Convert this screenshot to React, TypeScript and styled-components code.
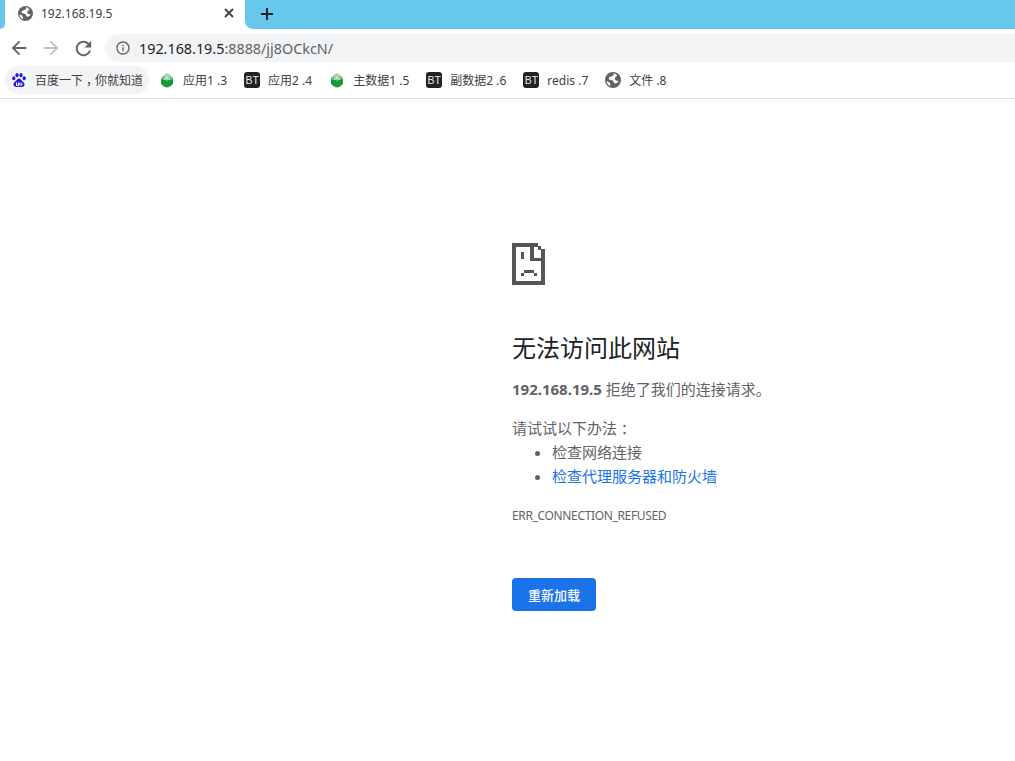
import React from 'react';
import styled, { createGlobalStyle } from 'styled-components';

const GlobalStyle = createGlobalStyle`
  html, body {
    margin: 0;
    padding: 0;
    background: #fff;
  }
  body {
    font-family: "Noto Sans", "Noto Sans CJK SC", sans-serif;
  }
`;

const Page = styled.div`
  width: 1015px;
  height: 761px;
  overflow: hidden;
  background: #fff;
`;

const TabStrip = styled.div`
  display: flex;
  height: 29px;
  background: #fff;
`;

const StripLeft = styled.div`
  width: 5px;
  background: #66c9ec;
  border-bottom-right-radius: 6px;
`;

const StripRight = styled.div`
  flex: 1;
  display: flex;
  align-items: center;
  padding: 0 0 2px 15px;
  background: #66c9ec;
  border-bottom-left-radius: 8px;
`;

const Tab = styled.div`
  width: 240px;
  box-sizing: border-box;
  display: flex;
  align-items: center;
  padding: 0 10px 3px 13px;
  gap: 8px;
`;

const TabTitle = styled.span`
  flex: 1;
  font-size: 12px;
  color: #3c4043;
`;

const Toolbar = styled.div`
  display: flex;
  align-items: center;
  height: 33px;
  padding: 5px 0 0 3px;
  box-sizing: border-box;
`;

const NavButton = styled.div`
  width: 32px;
  height: 24px;
  display: flex;
  align-items: center;
  justify-content: center;
`;

const Omnibox = styled.div`
  flex: 1;
  height: 28px;
  margin-left: 6px;
  display: flex;
  align-items: center;
  gap: 8px;
  padding-left: 10px;
  background: #f1f3f4;
  border-radius: 14px 0 0 14px;
`;

const UrlText = styled.span`
  font-size: 14.35px;
  color: #5f6368;
  b {
    font-weight: 400;
    color: #202124;
  }
`;

const BookmarkBar = styled.div`
  display: flex;
  align-items: center;
  height: 37px;
  padding-left: 5px;
  box-sizing: border-box;
  border-bottom: 1px solid #dadce0;
`;

const Bookmark = styled.div<{ $active?: boolean }>`
  display: flex;
  align-items: center;
  gap: 8px;
  height: 28px;
  padding: 0 6px;
  margin-right: ${({ $active }) => ($active ? '4px' : '5px')};
  border-radius: 14px;
  font-size: 12px;
  white-space: nowrap;
  color: #3c4043;
  background: ${({ $active }) => ($active ? '#f1f3f4' : 'transparent')};
`;

const BtBadge = styled.span`
  width: 16px;
  height: 16px;
  border-radius: 3px;
  background: #222;
  color: #e8e8e8;
  font-size: 10.5px;
  line-height: 16px;
  text-align: center;
  font-family: "Liberation Sans", sans-serif;
  font-weight: 400;
`;

/* full-width punctuation sits in the middle of its cell in the reference */
const Punct = styled.span<{ $cell: number }>`
  display: inline-block;
  width: ${({ $cell }) => $cell}px;
  text-align: center;
  font-feature-settings: "halt";
`;

const ErrorContent = styled.main`
  padding: 144px 0 0 512px;
  color: #5f6368;
  font-size: 15px;
`;

const SadFile = styled.svg`
  display: block;
  width: 33px;
  height: 42px;
`;

const Heading = styled.h1`
  margin: 45px 0 0;
  height: 36px;
  line-height: 36px;
  font-size: 24px;
  font-weight: 400;
  color: #202124;
`;

const Summary = styled.p`
  margin: 11px 0 0;
  line-height: 24px;
  strong {
    font-weight: 700;
  }
`;

const Advice = styled.p`
  margin: 15px 0 0;
  line-height: 24px;
`;

const AdviceList = styled.ul`
  margin: 0;
  padding: 0 0 0 40px;
  line-height: 24px;
`;

const AdviceLink = styled.a`
  color: #1a73e8;
  text-decoration: none;
`;

const ErrorCode = styled.div`
  margin-top: 18px;
  line-height: 20px;
  font-size: 12px;
  letter-spacing: -0.35px;
  color: #5f6368;
`;

const ReloadButton = styled.button`
  display: block;
  margin-top: 52px;
  width: 84px;
  height: 33px;
  padding: 0;
  border: 0;
  border-radius: 4px;
  background: #1a73e8;
  color: #fff;
  font-family: inherit;
  font-size: 13px;
  font-weight: 500;
`;

const Globe = ({ size }: { size: number }) => (
  <svg width={size} height={size} viewBox="0 0 16 16">
    <circle cx="8" cy="8" r="8" fill="#5f6368" />
    <path
      d="M8.500 1.200c.4 1 .2 2-.8 2.600C6.600 4.500 5 4.400 4.200 5.300c-.9 1 -.4 2.300.8 2.700 1.200.4 2.500.2 3.300 1 .6.600.3 1.400.8 2 .5.500 1.400.5 2.200.200 1-.4 1.900-1.300 2.300-2.300-1-.3-2-.2-2.900-.7-1.100-.6-1-1.800-.4-2.700.5-.8 1.500-1.100 2-1.900C11.500 2.600 10 1.500 8.500 1.200z"
      fill="#fff"
    />
    <path d="M1.600 9.500c1.300-.2 2.500.4 3.200 1.400.6.900.7 2.100.3 3-1.800-.8-3.100-2.500-3.500-4.400z" fill="#fff" />
  </svg>
);

const CloseIcon = () => (
  <svg width="12" height="12" viewBox="0 0 12 12">
    <path d="M2 2l8 8M10 2l-8 8" stroke="#3c4043" strokeWidth="1.8" fill="none" />
  </svg>
);

const PlusIcon = () => (
  <svg width="14" height="14" viewBox="0 0 14 14">
    <path d="M7 1v12M1 7h12" stroke="#202124" strokeWidth="2" fill="none" />
  </svg>
);

const ArrowIcon = ({ color, flip }: { color: string; flip?: boolean }) => (
  <svg width="22" height="22" viewBox="0 0 24 24" style={flip ? { transform: 'scaleX(-1)' } : undefined}>
    <path d="M20 11H7.830l5.590-5.590L12 4l-8 8 8 8 1.410-1.410L7.830 13H20v-2z" fill={color} />
  </svg>
);

const ReloadIcon = () => (
  <svg width="23" height="23" viewBox="0 0 24 24">
    <path
      d="M17.650 6.350C16.200 4.900 14.210 4 12 4c-4.420 0-7.990 3.580-7.990 8s3.570 8 7.990 8c3.730 0 6.840-2.550 7.730-6h-2.080c-.82 2.330-3.040 4-5.650 4-3.310 0-6-2.690-6-6s2.690-6 6-6c1.660 0 3.140.69 4.220 1.780L13 11h7V4l-2.350 2.350z"
      fill="#5f6368"
    />
  </svg>
);

const InfoIcon = () => (
  <svg width="16" height="16" viewBox="0 0 24 24">
    <path
      d="M11 7h2v2h-2zm0 4h2v6h-2zm1-9C6.480 2 2 6.480 2 12s4.480 10 10 10 10-4.480 10-10S17.520 2 12 2zm0 18c-4.410 0-8-3.590-8-8s3.590-8 8-8 8 3.590 8 8-3.590 8-8 8z"
      fill="#5f6368"
    />
  </svg>
);

const PawIcon = () => (
  <svg width="16" height="16" viewBox="0 0 16 16">
    <rect width="16" height="16" rx="2" fill="#f4f6fc" />
    <g fill="#2319dc">
      <ellipse cx="2.800" cy="6.300" rx="1.600" ry="2" />
      <ellipse cx="6" cy="3.200" rx="1.600" ry="2.100" />
      <ellipse cx="10" cy="3.200" rx="1.600" ry="2.100" />
      <ellipse cx="13.200" cy="6.300" rx="1.600" ry="2" />
      <path d="M8 6.500c-1.600 0-2 1.600-3.200 2.600C3.500 10.100 2.500 11 2.500 12.500c0 1.800 1.500 2.500 3 2.500 1 0 1.600-.3 2.500-.3s1.500.3 2.500.3c1.500 0 3-.7 3-2.500 0-1.500-1-2.400-2.300-3.400C10 8.100 9.600 6.500 8 6.500z" />
    </g>
    <path d="M5.500 10.500v3h2v-3M8.800 10.500v2.500h2v-2.500" fill="none" stroke="#fff" strokeWidth="1" />
  </svg>
);

const ShieldIcon = () => (
  <svg width="16" height="16" viewBox="0 0 16 16">
    <path d="M2 7h12v3.500C14 13 11 15 8 15.500 5 15 2 13 2 10.500z" fill="#169a3a" />
    <path d="M8 1L2 5.500 2 7 8 8.500 14 7 14 5.500z" fill="#7fc292" />
    <path d="M8 1v7.500M4.500 3.500L11 7.500M11.500 3.500L5 7.500" stroke="#e4f3e8" strokeWidth=".8" fill="none" />
  </svg>
);

const SadFileIcon = () => (
  <SadFile viewBox="0 0 33 42" shapeRendering="crispEdges">
    <path
      fill="#54575a"
      fillRule="evenodd"
      d="M0 0h26v3h3v3h4v36H0zM4 4v34h25V18H18V4zM22 4v11h7V7h-3V4zM9 9h3v7H9zM12 27h10v3H12zM9 30h3v3H9zM22 30h3v3h-3z"
    />
  </SadFile>
);

const bookmarks = [
  { icon: <ShieldIcon />, label: '应用1 .3' },
  { icon: <BtBadge>BT</BtBadge>, label: '应用2 .4' },
  { icon: <ShieldIcon />, label: '主数据1 .5' },
  { icon: <BtBadge>BT</BtBadge>, label: '副数据2 .6' },
  { icon: <BtBadge>BT</BtBadge>, label: 'redis .7' },
  { icon: <Globe size={16} />, label: '文件 .8' },
];

export default function App() {
  return (
    <Page>
      <GlobalStyle />
      <TabStrip>
        <StripLeft />
        <Tab>
          <Globe size={15} />
          <TabTitle>192.168.19.5</TabTitle>
          <CloseIcon />
        </Tab>
        <StripRight>
          <PlusIcon />
        </StripRight>
      </TabStrip>
      <Toolbar>
        <NavButton>
          <ArrowIcon color="#5f6368" />
        </NavButton>
        <NavButton>
          <ArrowIcon color="#bdc1c6" flip />
        </NavButton>
        <NavButton>
          <ReloadIcon />
        </NavButton>
        <Omnibox>
          <InfoIcon />
          <UrlText>
            <b>192.168.19.5</b>:8888/jj8OCkcN/
          </UrlText>
        </Omnibox>
      </Toolbar>
      <BookmarkBar>
        <Bookmark $active>
          <PawIcon />
          <span>
            百度一下<Punct $cell={12}>，</Punct>你就知道
          </span>
        </Bookmark>
        {bookmarks.map((b) => (
          <Bookmark key={b.label}>
            {b.icon}
            {b.label}
          </Bookmark>
        ))}
      </BookmarkBar>
      <ErrorContent>
        <SadFileIcon />
        <Heading>无法访问此网站</Heading>
        <Summary>
          <strong>192.168.19.5</strong> 拒绝了我们的连接请求。
        </Summary>
        <Advice>
          请试试以下办法<Punct $cell={15}>：</Punct>
        </Advice>
        <AdviceList>
          <li>检查网络连接</li>
          <li>
            <AdviceLink href="#">检查代理服务器和防火墙</AdviceLink>
          </li>
        </AdviceList>
        <ErrorCode>ERR_CONNECTION_REFUSED</ErrorCode>
        <ReloadButton>重新加载</ReloadButton>
      </ErrorContent>
    </Page>
  );
}
